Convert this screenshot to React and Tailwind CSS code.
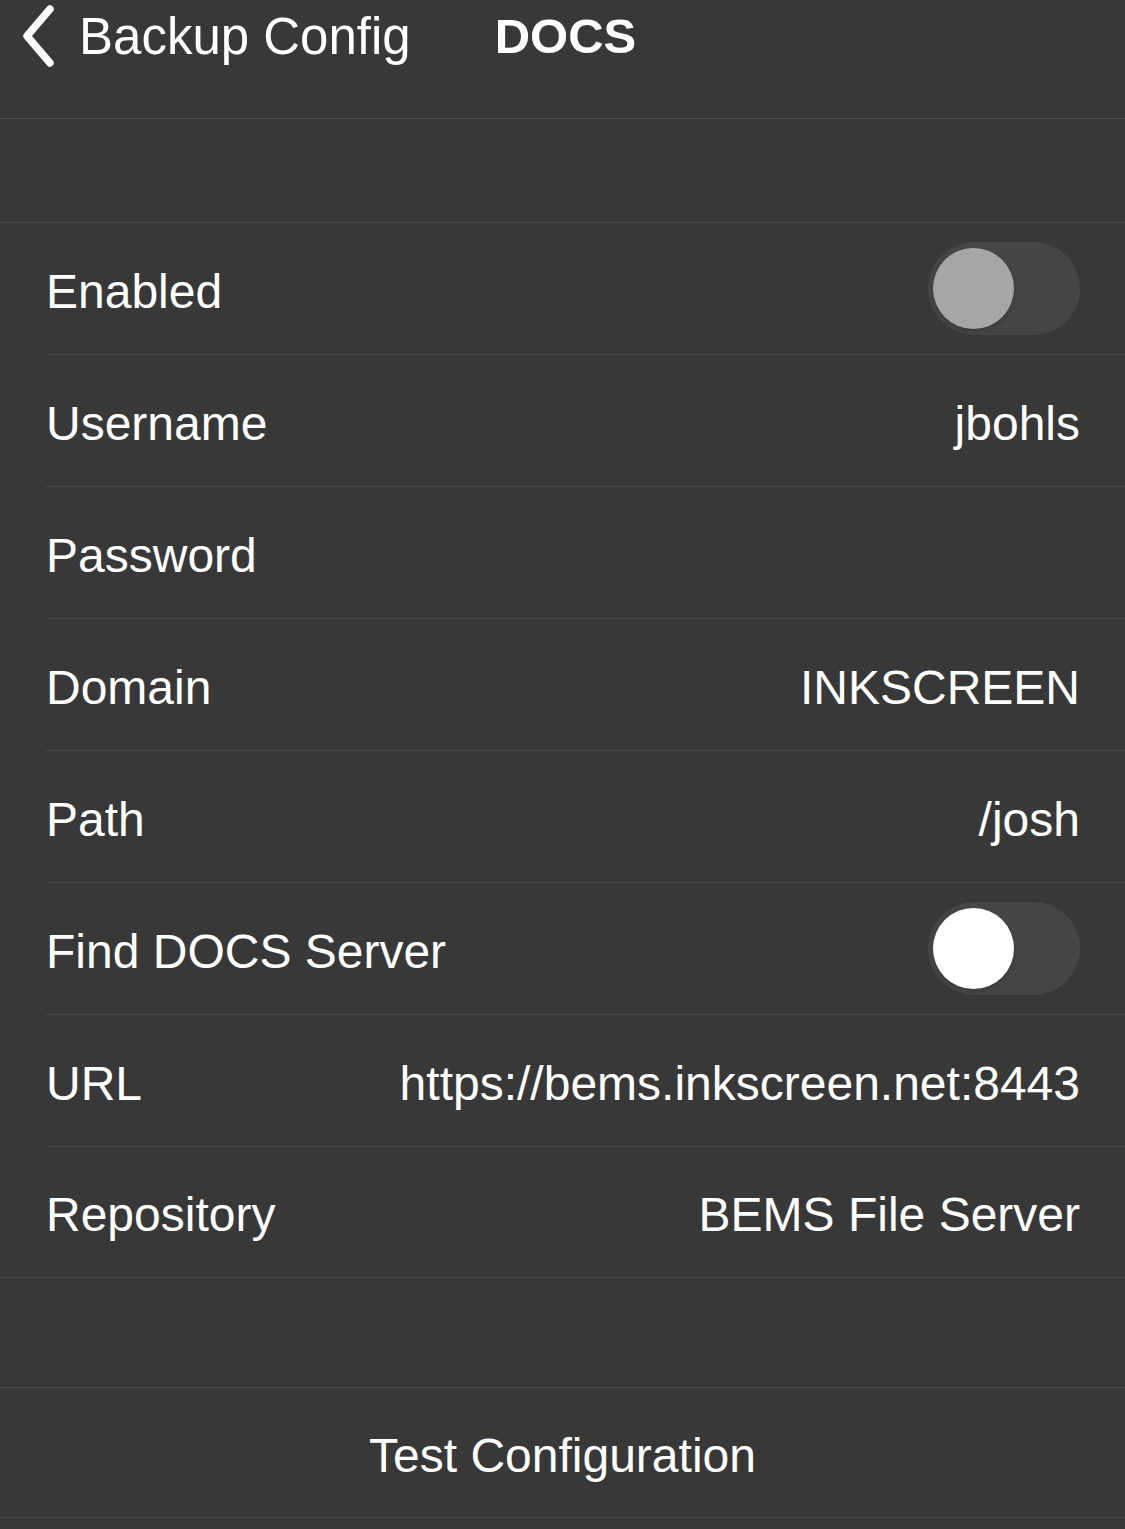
const rows = [
  { label: "Enabled", toggle: "off" },
  { label: "Username", value: "jbohls" },
  { label: "Password", value: "" },
  { label: "Domain", value: "INKSCREEN" },
  { label: "Path", value: "/josh" },
  { label: "Find DOCS Server", toggle: "on" },
  { label: "URL", value: "https://bems.inkscreen.net:8443" },
  { label: "Repository", value: "BEMS File Server" },
];

const Toggle = ({ on }) => (
  <div className="w-[152px] h-[93px] rounded-full bg-[#454547] flex items-center px-[5px]">
    <div
      className={`w-[81px] h-[81px] rounded-full shadow-md ${
        on ? "bg-white" : "bg-[#a6a6a6]"
      }`}
    />
  </div>
);

export default function App() {
  return (
    <div
      className="min-h-screen bg-[#383838] text-white"
      style={{ fontFamily: '"Liberation Sans", Arial, sans-serif' }}
    >
      {/* Nav bar */}
      <div className="h-[119px] border-b border-[#4d4d4d]">
        <div className="h-[72px] flex items-center">
          <div className="flex items-center pl-[20px]">
            <svg width="38" height="66" viewBox="0 0 38 66" fill="none">
              <path
                d="M30 6 L7 33 L30 60"
                stroke="white"
                strokeWidth="7.5"
                strokeLinecap="round"
                strokeLinejoin="round"
              />
            </svg>
            <span className="ml-[21px] text-[51px] leading-none">Backup Config</span>
          </div>
          <span className="ml-[84px] text-[49px] font-bold leading-none">DOCS</span>
        </div>
      </div>

      <div className="h-[103px]" />

      {/* Settings rows */}
      <div className="border-t border-b border-[#4a4a4a]">
        {rows.map((r, i) => (
          <div key={r.label} className="pl-[46px]">
            <div
              className={`flex items-center justify-between pr-[45px] text-[48px] ${
                i < rows.length - 1 ? "h-[132px] border-b border-[#4a4a4a]" : "h-[130px]"
              }`}
            >
              <span className="pt-[6px]">{r.label}</span>
              {r.toggle ? (
                <Toggle on={r.toggle === "on"} />
              ) : (
                <span className="pt-[6px]">{r.value}</span>
              )}
            </div>
          </div>
        ))}
      </div>

      <div className="h-[109px]" />

      <div className="border-t border-b border-[#4a4a4a] h-[131px] flex items-center justify-center text-[48px]">
        <span className="pt-[6px]">Test Configuration</span>
      </div>
    </div>
  );
}
